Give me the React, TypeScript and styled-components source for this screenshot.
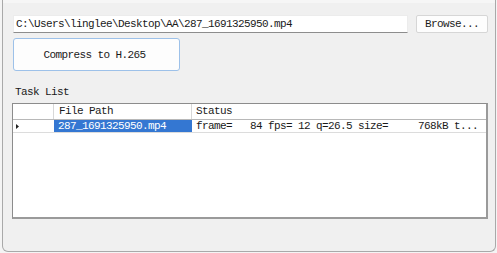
import React from 'react';
import styled, { createGlobalStyle } from 'styled-components';

const GlobalStyle = createGlobalStyle`
  html, body {
    margin: 0;
    padding: 0;
    background: #f4f4f4;
  }
  body {
    width: 497px;
    height: 253px;
    overflow: hidden;
  }
`;

const mono = `"Liberation Mono", monospace`;

const Window = styled.div`
  box-sizing: border-box;
  margin-left: 2px;
  width: 494px;
  height: 252px;
  background: #f0f0f0;
  border: 1px solid #a9a9a9;
  border-top: none;
  border-radius: 0 0 6px 6px;
  box-shadow: inset 0 3px 0 #f6f6f6;
  padding: 15px 7px 0 10px;
  display: flex;
  flex-direction: column;
  font-family: ${mono};
  font-size: 11px;
  letter-spacing: -0.6px;
  color: #1a1a1a;
`;

const FileRow = styled.div`
  display: flex;
  gap: 8px;
  height: 18px;
`;

const PathInput = styled.div`
  box-sizing: border-box;
  width: 395px;
  height: 18px;
  background: #fff;
  border: 1px solid #ececec;
  border-bottom: 1px solid #8d8d8d;
  padding: 0 2px;
  line-height: 17px;
  white-space: nowrap;
  overflow: hidden;
`;

const Button = styled.div<{ $primary?: boolean }>`
  box-sizing: border-box;
  display: flex;
  align-items: center;
  justify-content: center;
  background: #fdfdfd;
  border: 1px solid ${(p) => (p.$primary ? '#9dc1e9' : '#d6d6d6')};
  border-radius: ${(p) => (p.$primary ? '3px' : '2px')};
  white-space: nowrap;
`;

const BrowseButton = styled(Button)`
  width: 72px;
  height: 18px;
`;

const CompressButton = styled(Button)`
  margin-top: 5px;
  width: 167px;
  height: 33px;
  padding-right: 4px;
`;

const SectionLabel = styled.div`
  margin-top: 15px;
  padding-left: 2px;
  height: 12px;
  line-height: 12px;
`;

const Table = styled.div`
  box-sizing: border-box;
  margin: 5px 0 0 -1px;
  width: 476px;
  height: 116px;
  background: #fff;
  border: 1px solid #8c8c8c;
  border-right: 2px solid #9a9a9a;
  border-bottom: 2px solid #9a9a9a;
`;

const Row = styled.div<{ $header?: boolean }>`
  display: grid;
  grid-template-columns: 41px 138px 1fr;
  height: ${(p) => (p.$header ? '15px' : '12px')};
  border-bottom: 1px solid ${(p) => (p.$header ? '#b8b8b8' : '#dcdcdc')};
`;

const Cell = styled.div<{ $selected?: boolean; $divider?: boolean }>`
  box-sizing: border-box;
  padding-left: 4px;
  line-height: 15px;
  white-space: pre;
  overflow: hidden;
  background: ${(p) => (p.$selected ? '#3477d2' : 'transparent')};
  color: ${(p) => (p.$selected ? '#fff' : 'inherit')};
  border-right: ${(p) => (p.$divider ? '1px solid #d8d8d8' : 'none')};
`;

const DataCell = styled(Cell)`
  line-height: 13px;
`;

const RowMarker = styled.div`
  display: flex;
  align-items: center;
  padding-left: 3px;
`;

const App: React.FC = () => {
  return (
    <>
      <GlobalStyle />
      <Window>
        <FileRow>
          <PathInput>C:\Users\linglee\Desktop\AA\287_1691325950.mp4</PathInput>
          <BrowseButton>Browse...</BrowseButton>
        </FileRow>

        <CompressButton $primary>Compress to H.265</CompressButton>

        <SectionLabel>Task List</SectionLabel>

        <Table>
          <Row $header>
            <Cell $divider />
            <Cell $divider style={{ paddingLeft: 5 }}>File Path</Cell>
            <Cell>Status</Cell>
          </Row>
          <Row>
            <RowMarker>
              <svg width="4" height="5" viewBox="0 0 4 5">
                <path d="M0 0 L3 2.5 L0 5 Z" fill="#222" />
              </svg>
            </RowMarker>
            <DataCell $selected>287_1691325950.mp4</DataCell>
            <DataCell>frame=   84 fps= 12 q=26.5 size=     768kB t...</DataCell>
          </Row>
        </Table>
      </Window>
    </>
  );
};

export default App;
